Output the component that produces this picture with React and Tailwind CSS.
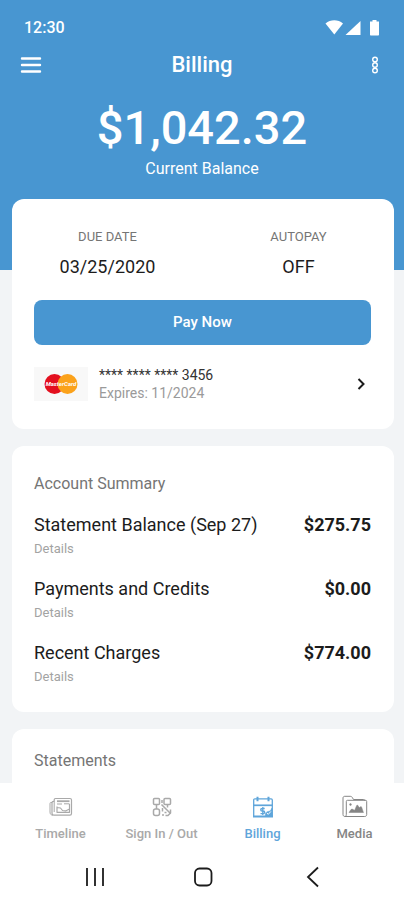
import React, { useState } from "react";

const summary = [
  { label: "Statement Balance (Sep 27)", amount: "$275.75" },
  { label: "Payments and Credits", amount: "$0.00" },
  { label: "Recent Charges", amount: "$774.00" },
];

const TimelineIcon = () => (
  <svg width="24" height="24" viewBox="0 0 24 24" fill="none" stroke="currentColor" strokeLinejoin="round">
    <path d="M6.5 3.500H21c1 0 1.500.5 1.500 1.500v13.500c0 1-.5 1.700-1.500 1.700H5c-1.500 0-2-.7-2-2V8c0-1 .5-1.700 1.500-1.700h.7V4.800c0-.8.5-1.300 1.300-1.300z" strokeWidth="1.200" />
    <path d="M3 7.500H1.800c-.5 0-.8.4-.8 1V17c0 2 1 3.200 3 3.200M5.200 6.500v10.500" strokeWidth="1" />
    <path d="M8 6.200h12.500" strokeWidth="1.800" />
    <path d="M8 9h5M15 8.800h5.500" strokeWidth="1" />
    <path d="M8 11.500v5.800h12.500V9M8 12.500l3.500.5 2 2.500 3.500.3 3.500-1.800" strokeWidth="1.200" />
  </svg>
);

const SignIcon = () => (
  <svg width="24" height="24" viewBox="0 0 24 24" fill="none" stroke="currentColor" strokeWidth="1.5" strokeLinejoin="round">
    <rect x="3.500" y="3.500" width="6" height="6" rx="1" />
    <rect x="14" y="3.500" width="6.500" height="6" rx="1" />
    <rect x="3.500" y="14" width="6" height="6.500" rx="2" />
    <path d="M6.500 9.500V14M12 5v3M11.500 9.500l5 5 4 4" />
    <path d="M17.500 9.500v3M12.500 13v3.500M20.500 14.500v3.500l-2.500 2.500h-2.500M12 20h2M14.500 17.500h2" />
  </svg>
);

const BillingIcon = () => (
  <svg width="24" height="24" viewBox="0 0 24 24" fill="none" stroke="currentColor" strokeWidth="1.3" strokeLinejoin="round">
    <path d="M2.700 21.300V5c0-.8.4-1.200 1.200-1.200h16.200c.8 0 1.200.4 1.200 1.200v16.300" />
    <path d="M6.500 1.800v4.400M17.500 1.800v4.400" strokeWidth="2" />
    <path d="M2.500 10.300h19" strokeWidth="1.700" />
    <path d="M2 21.500h20" strokeWidth="2" />
    <path d="M11.800 12v8M13.700 13.500h-2.500c-2 0-2 2.500 0 2.500h1c2 0 2 2.600 0 2.600h-2.700" />
    <path d="M21 13v8h-6.500c-.7-2.500.5-4.300 2.500-4.500 2.200-.2 3-1.500 4-3.500z" fill="currentColor" strokeWidth=".5" />
    <path d="M15.800 18l1.500 1.300 2.500-2.800" stroke="#ffffff" strokeWidth="1" />
  </svg>
);

const MediaIcon = () => (
  <svg width="26" height="24" viewBox="0 0 26 24" fill="none" stroke="currentColor" strokeLinejoin="round">
    <path d="M3 21.500c-1.200 0-2-.8-2-2V3c0-1 .7-1.700 1.700-1.700h5.600c1 0 1.500.5 2 1.200L11.500 4.500h10c1 0 1.500.5 1.500 1.500" strokeWidth="1" />
    <path d="M3 21.500c1-.2 1.300-1 1.300-2V6.500c0-.8.4-1.200 1.200-1.200h18c.8 0 1.200.4 1.200 1.200v13c0 1.200-.8 2-2 2z" strokeWidth="1" />
    <path d="M7 17.500c1-1.500 2-3.500 3-3.500s1.500 1.200 2.300 1.200c1 0 2-5.200 3-5.200s1.200 2.500 2 2.500 1-1 1.700-1 1.500 3.500 2.500 6z" fill="currentColor" strokeWidth=".5" />
    <circle cx="8.500" cy="9.500" r=".9" fill="currentColor" strokeWidth=".5" />
  </svg>
);

const tabs = [
  { name: "Timeline", icon: TimelineIcon },
  { name: "Sign In / Out", icon: SignIcon },
  { name: "Billing", icon: BillingIcon },
  { name: "Media", icon: MediaIcon },
];

const tabColor = (name, active) => {
  if (name === active) return "text-[#5fa5da]";
  return name === "Media" ? "text-[#858585]" : "text-[#a9a9a9]";
};

const CardLogo = () => (
  <svg width="54" height="34" viewBox="0 0 54 34" role="img" aria-label="MasterCard">
    <rect width="54" height="34" fill="#f8f8f8" />
    <circle cx="20.500" cy="17" r="10" fill="#e3101f" />
    <circle cx="33.500" cy="17" r="10" fill="#fba21b" />
    <text
      x="27"
      y="19"
      textAnchor="middle"
      fill="#fff"
      fontFamily="Roboto, sans-serif"
      fontSize="6"
      fontWeight="700"
      fontStyle="italic"
    >
      MasterCard
    </text>
  </svg>
);

const StatusBar = () => (
  <div className="flex items-center justify-between pt-4 px-6 h-10">
    <span className="text-base leading-6 font-medium">12:30</span>
    <svg width="56" height="18" viewBox="0 0 56 18" fill="currentColor">
      <path d="M1.500 4.500C6.500.3 14 .3 19 4.500L10.300 15.500z" />
      <path d="M36.500 2v14H21.500z" />
      <path d="M46 2.500h2.500V1h4v1.500H55V15.500c0 .6-.4 1-1 1h-7c-.6 0-1-.4-1-1z" />
    </svg>
  </div>
);

const App = () => {
  const [activeTab, setActiveTab] = useState("Billing");

  return (
    <div className="h-screen flex flex-col bg-white font-['Roboto',sans-serif] text-[#1c1c1c]">
      <main className="flex-1 min-h-0 overflow-hidden bg-[#f2f4f6]">
        <header className="bg-[#4896d1] text-white pb-22">
          <StatusBar />
          <div className="flex items-center justify-between h-[50px] px-5">
            <button aria-label="Menu" className="w-6">
              <svg width="22" height="18" viewBox="0 0 22 18" stroke="currentColor" strokeWidth="2.400" strokeLinecap="round">
                <path d="M2 2.500h18M2 9h18M2 15.500h18" />
              </svg>
            </button>
            <h1 className="text-[22px] leading-8 font-medium">Billing</h1>
            <button aria-label="More options" className="w-6 flex justify-end">
              <svg width="18" height="18" viewBox="0 0 18 18" fill="none" stroke="currentColor" strokeWidth="1.400">
                <circle cx="9" cy="3.500" r="2.300" />
                <circle cx="9" cy="9" r="2.300" />
                <circle cx="9" cy="14.500" r="2.300" />
              </svg>
            </button>
          </div>
          <div className="text-center pt-2.5">
            <p className="text-[47px] leading-14 font-medium">$1,042.32</p>
            <p className="text-base leading-[26px]">Current Balance</p>
          </div>
        </header>

        <div className="flex flex-col gap-[17px] pl-3 pr-[10px] -mt-[71px]">
          {/* Payment card */}
          <section className="bg-white rounded-xl pt-[26px] pb-[27px]">
            <dl className="grid grid-cols-2 text-center">
              <div>
                <dt className="text-[13px] leading-6 text-[#757575]">DUE DATE</dt>
                <dd className="pt-1.5 text-lg leading-6">03/25/2020</dd>
              </div>
              <div>
                <dt className="text-[13px] leading-6 text-[#757575]">AUTOPAY</dt>
                <dd className="pt-1.5 text-lg leading-6">OFF</dd>
              </div>
            </dl>
            <div className="pl-[22px] pr-[23px] pt-[21px]">
              <button className="w-full h-[45px] rounded-lg bg-[#4896d1] text-white text-[15px] font-medium">
                Pay Now
              </button>
              <button className="w-full flex items-center pt-[21px] text-left">
                <CardLogo />
                <span className="flex-1 pl-[11px] text-sm">
                  <span className="block leading-[18px] text-[#333333]">**** **** **** 3456</span>
                  <span className="block leading-[18px] text-[#9a9a9a]">Expires: 11/2024</span>
                </span>
                <svg width="20" height="20" viewBox="0 0 20 20" fill="none" stroke="#1c1c1c" strokeWidth="2">
                  <path d="M7.500 5l5 5-5 5" />
                </svg>
              </button>
            </div>
          </section>

          {/* Account summary */}
          <section className="bg-white rounded-xl pl-[22px] pr-[23px] pt-[26px] pb-[25px]">
            <h2 className="text-base leading-6 text-[#757575]">Account Summary</h2>
            <ul className="flex flex-col gap-[18px] pt-[17px]">
              {summary.map((row) => (
                <li key={row.label} className="flex items-start justify-between">
                  <div>
                    <p className="text-lg leading-6">{row.label}</p>
                    <a href="#details" className="block pt-0.5 text-[13px] leading-5 text-[#a3a3a3]">
                      Details
                    </a>
                  </div>
                  <p className="text-lg leading-6 font-bold">{row.amount}</p>
                </li>
              ))}
            </ul>
          </section>

          {/* Statements */}
          <section className="bg-white rounded-xl pl-[22px] pr-[23px] pt-5 pb-7">
            <h2 className="text-base leading-6 text-[#757575]">Statements</h2>
          </section>
        </div>
      </main>

      <nav className="grid grid-cols-[101fr_101fr_101fr_83fr] pl-2.5 pr-2 pt-3 pb-[22px]">
        {tabs.map(({ name, icon: Icon }) => (
          <button
            key={name}
            onClick={() => setActiveTab(name)}
            className={`flex flex-col items-center gap-[5px] ${tabColor(name, activeTab)}`}
          >
            <Icon />
            <span className="text-[13px] leading-5 font-medium">{name}</span>
          </button>
        ))}
      </nav>

      {/* Android system buttons */}
      <div className="flex items-center justify-between pl-[84px] pr-20 pb-3 text-[#1c1c1c]">
        <button aria-label="Recent apps">
          <svg width="22" height="22" viewBox="0 0 22 22" fill="none" stroke="currentColor" strokeWidth="1.800">
            <path d="M3 2v18M11 2v18M19 2v18" />
          </svg>
        </button>
        <button aria-label="Home">
          <svg width="22" height="22" viewBox="0 0 22 22" fill="none" stroke="currentColor" strokeWidth="1.800">
            <rect x="2" y="2.500" width="16.500" height="17" rx="4.500" />
          </svg>
        </button>
        <button aria-label="Back">
          <svg width="22" height="22" viewBox="0 0 22 22" fill="none" stroke="currentColor" strokeWidth="1.800">
            <path d="M16 1.500L6 11l10 9.500" />
          </svg>
        </button>
      </div>
    </div>
  );
};

export default App;
